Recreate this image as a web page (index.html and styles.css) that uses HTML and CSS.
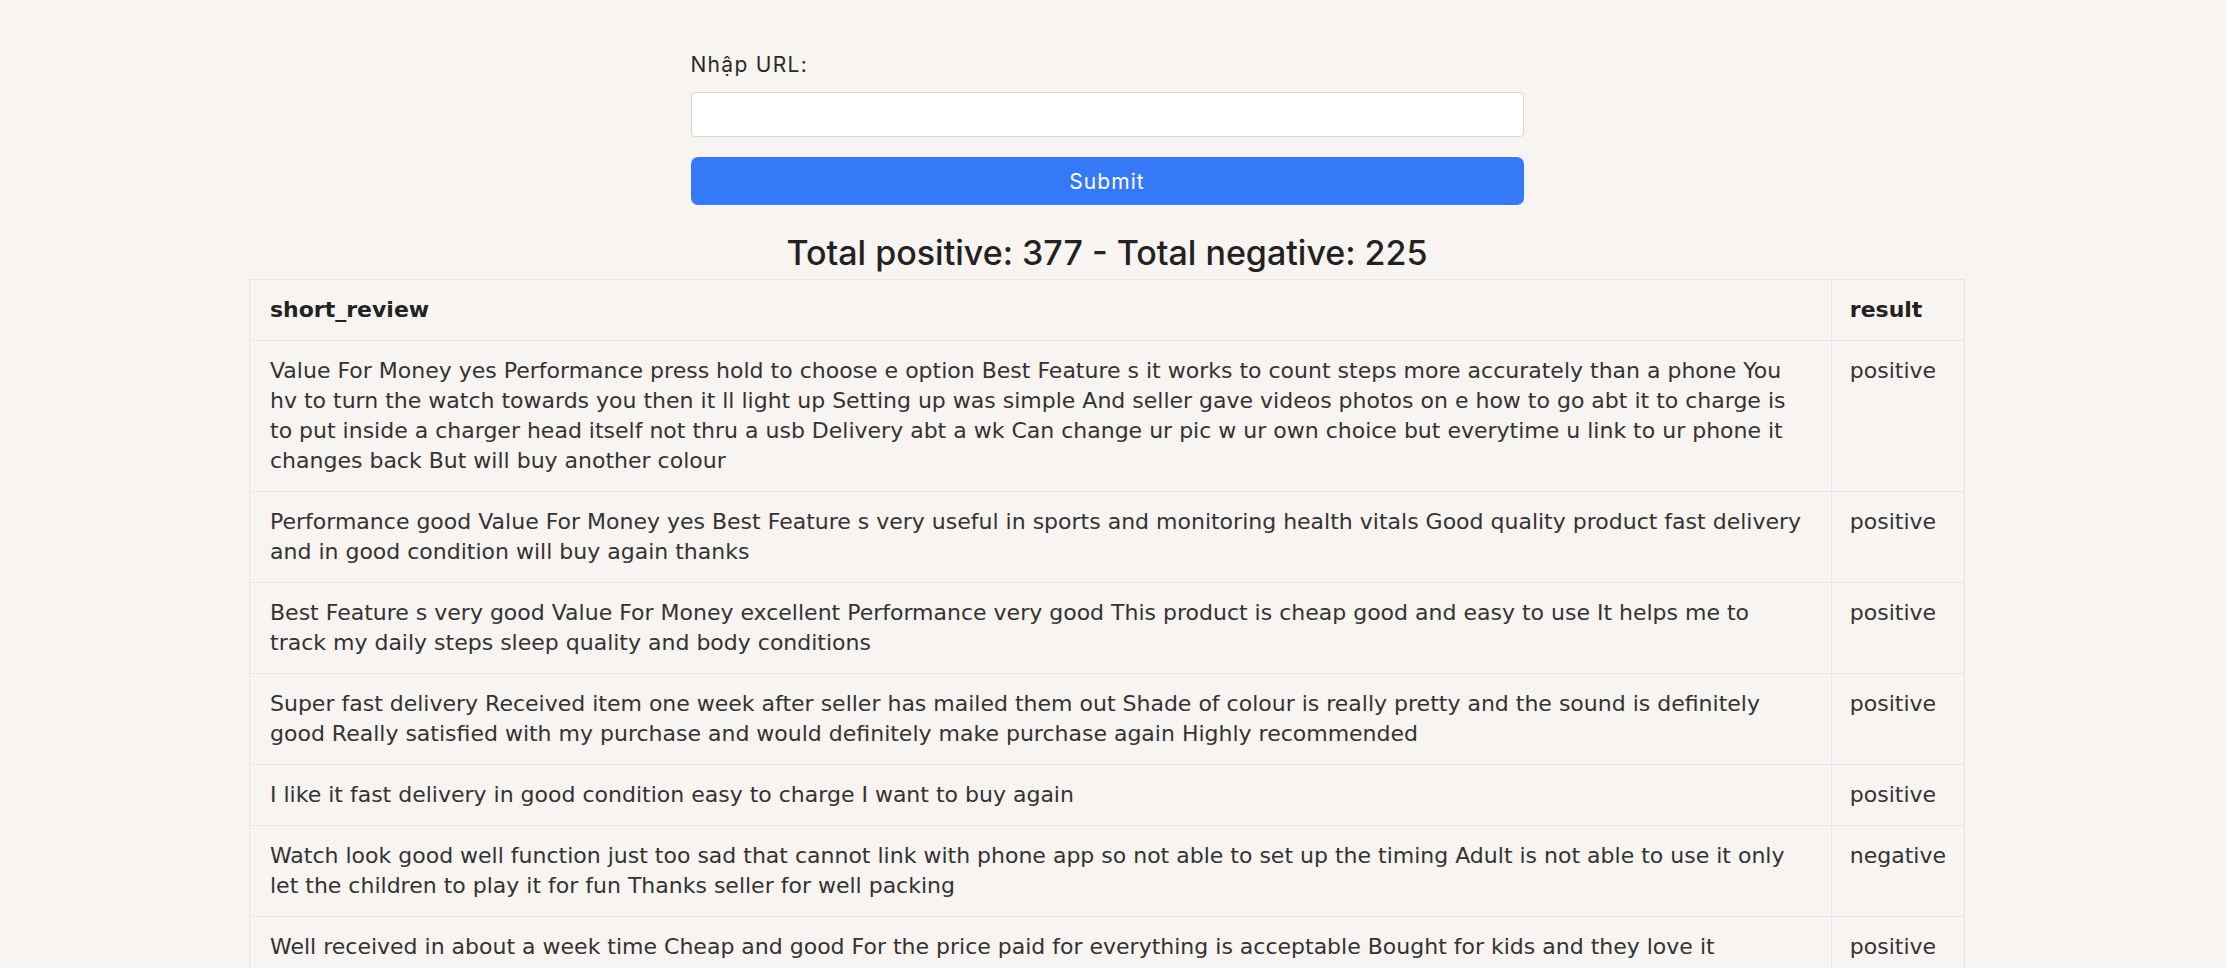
FILE: index.html
```html
<!DOCTYPE html>
<html lang="vi">
<head>
<meta charset="utf-8">
<title>Review sentiment</title>
<link rel="stylesheet" href="styles.css">
</head>
<body>
<main class="page">
  <form class="url-form">
    <label class="url-label" for="url">Nhập URL:</label>
    <input class="url-input" id="url" type="text">
    <button class="submit-btn" type="button">Submit</button>
  </form>
  <h2 class="totals">Total positive: 377 - Total negative: 225</h2>
  <table class="reviews">
    <thead>
      <tr><th class="col-review">short_review</th><th class="col-result">result</th></tr>
    </thead>
    <tbody>
      <tr><td>Value For Money yes Performance press hold to choose e option Best Feature s it works to count steps more accurately than a phone You hv to turn the watch towards you then it ll light up Setting up was simple And seller gave videos photos on e how to go abt it to charge is to put inside a charger head itself not thru a usb Delivery abt a wk Can change ur pic w ur own choice but everytime u link to ur phone it changes back But will buy another colour</td><td class="result">positive</td></tr>
      <tr><td>Performance good Value For Money yes Best Feature s very useful in sports and monitoring health vitals Good quality product fast delivery and in good condition will buy again thanks</td><td class="result">positive</td></tr>
      <tr><td>Best Feature s very good Value For Money excellent Performance very good This product is cheap good and easy to use It helps me to track my daily steps sleep quality and body conditions</td><td class="result">positive</td></tr>
      <tr><td>Super fast delivery Received item one week after seller has mailed them out Shade of colour is really pretty and the sound is definitely good Really satisfied with my purchase and would definitely make purchase again Highly recommended</td><td class="result">positive</td></tr>
      <tr><td>I like it fast delivery in good condition easy to charge I want to buy again</td><td class="result">positive</td></tr>
      <tr><td>Watch look good well function just too sad that cannot link with phone app so not able to set up the timing Adult is not able to use it only let the children to play it for fun Thanks seller for well packing</td><td class="result">negative</td></tr>
      <tr><td>Well received in about a week time Cheap and good For the price paid for everything is acceptable Bought for kids and they love it</td><td class="result">positive</td></tr>
    </tbody>
  </table>
</main>
</body>
</html>
```

FILE: styles.css
```css
* { box-sizing: border-box; }
html, body {
  margin: 0;
  background: #f8f4f1;
}
body {
  font-family: Inter, "Liberation Sans", Arial, sans-serif;
  color: #333;
  padding-right: 12px;
}
.page {
  display: flex;
  flex-direction: column;
  align-items: center;
  padding-top: 53px;
}
.url-form {
  width: 833px;
  display: flex;
  flex-direction: column;
}
.url-label {
  font-size: 21px;
  line-height: 24px;
  letter-spacing: 1.3px;
  color: #2a2a2a;
}
.url-input {
  margin-top: 15px;
  height: 45px;
  border: 1px solid #d6d6d6;
  border-radius: 4px;
  background: #fff;
}
.submit-btn {
  margin-top: 20px;
  height: 48px;
  border: none;
  border-radius: 7px;
  background: #3579f6;
  color: #fff;
  font-family: Inter, "Liberation Sans", Arial, sans-serif;
  font-size: 21px;
  letter-spacing: 1.1px;
}
.totals {
  margin: 28px 0 0;
  font-size: 34px;
  line-height: 40px;
  font-weight: 500;
  color: #222;
}
.reviews {
  margin-top: 6px;
  width: 1716px;
  border-collapse: collapse;
  font-family: "DejaVu Sans", Verdana, sans-serif;
  font-size: 22px;
  line-height: 30px;
}
.reviews th, .reviews td {
  border: 1px solid #e3e6ea;
  padding: 15px 20px;
  text-align: left;
  vertical-align: top;
}
.reviews th {
  font-weight: bold;
  color: #222;
}
.reviews .col-result,
.reviews .result {
  width: 133px;
  padding-left: 18px;
  padding-right: 18px;
}
```
